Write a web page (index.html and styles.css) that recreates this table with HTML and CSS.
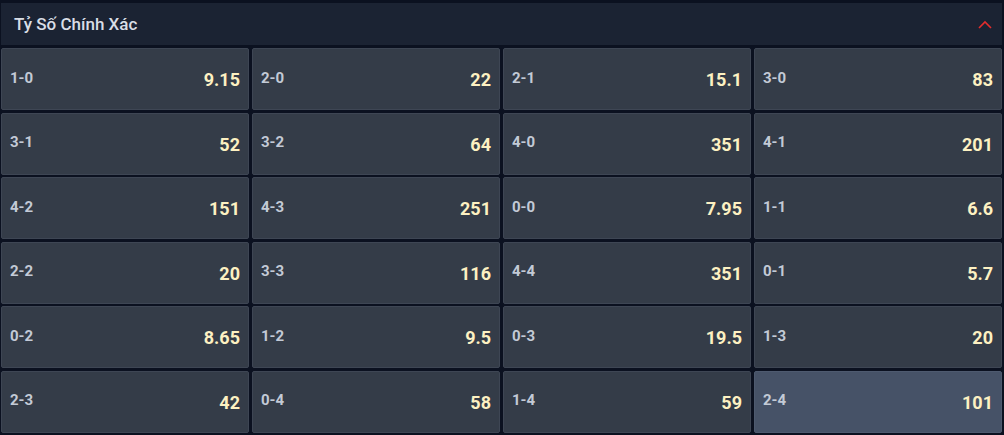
FILE: index.html
```html
<!DOCTYPE html>
<html lang="vi">
<head>
<meta charset="utf-8">
<title>Tỷ Số Chính Xác</title>
<link rel="stylesheet" href="styles.css">
</head>
<body>
<div class="panel">
  <div class="header">
    <span class="title">Tỷ Số Chính Xác</span>
    <svg class="chev" width="14" height="9" viewBox="0 0 14 9"><path d="M1 8 L7 2 L13 8" fill="none" stroke="#e42d2d" stroke-width="1.6"/></svg>
  </div>
  <div class="grid">
    <div class="cell"><span class="lbl">1-0</span><span class="odd">9.15</span></div>
    <div class="cell"><span class="lbl">2-0</span><span class="odd">22</span></div>
    <div class="cell"><span class="lbl">2-1</span><span class="odd">15.1</span></div>
    <div class="cell"><span class="lbl">3-0</span><span class="odd">83</span></div>
    <div class="cell"><span class="lbl">3-1</span><span class="odd">52</span></div>
    <div class="cell"><span class="lbl">3-2</span><span class="odd">64</span></div>
    <div class="cell"><span class="lbl">4-0</span><span class="odd">351</span></div>
    <div class="cell"><span class="lbl">4-1</span><span class="odd">201</span></div>
    <div class="cell"><span class="lbl">4-2</span><span class="odd">151</span></div>
    <div class="cell"><span class="lbl">4-3</span><span class="odd">251</span></div>
    <div class="cell"><span class="lbl">0-0</span><span class="odd">7.95</span></div>
    <div class="cell"><span class="lbl">1-1</span><span class="odd">6.6</span></div>
    <div class="cell"><span class="lbl">2-2</span><span class="odd">20</span></div>
    <div class="cell"><span class="lbl">3-3</span><span class="odd">116</span></div>
    <div class="cell"><span class="lbl">4-4</span><span class="odd">351</span></div>
    <div class="cell"><span class="lbl">0-1</span><span class="odd">5.7</span></div>
    <div class="cell"><span class="lbl">0-2</span><span class="odd">8.65</span></div>
    <div class="cell"><span class="lbl">1-2</span><span class="odd">9.5</span></div>
    <div class="cell"><span class="lbl">0-3</span><span class="odd">19.5</span></div>
    <div class="cell"><span class="lbl">1-3</span><span class="odd">20</span></div>
    <div class="cell"><span class="lbl">2-3</span><span class="odd">42</span></div>
    <div class="cell"><span class="lbl">0-4</span><span class="odd">58</span></div>
    <div class="cell"><span class="lbl">1-4</span><span class="odd">59</span></div>
    <div class="cell active"><span class="lbl">2-4</span><span class="odd">101</span></div>
  </div>
</div>
</body>
</html>
```
FILE: styles.css
```css
html, body {
  margin: 0;
  padding: 0;
  background: #0b1120;
  font-family: Roboto, "Liberation Sans", Arial, sans-serif;
}
.panel {
  padding: 3px 2px 0 1px;
}
.header {
  height: 42px;
  background: #1b2333;
  display: flex;
  align-items: center;
  justify-content: space-between;
  padding: 0 10px 0 13px;
  margin-bottom: 3px;
}
.title {
  color: #d9dee6;
  font-size: 17px;
  font-weight: 500;
}
.chev {
  display: block;
  margin-top: 1px;
}
.grid {
  display: grid;
  grid-template-columns: repeat(4, 1fr);
  column-gap: 3px;
  row-gap: 2.5px;
}
.cell {
  height: 62px;
  box-sizing: border-box;
  background: #343c48;
  border: 1px solid #3e4654;
  border-radius: 2px;
  display: flex;
  align-items: center;
  justify-content: space-between;
  padding: 0 8px 0 8px;
}
.cell.active {
  background: #465267;
  border-color: #4e5a6f;
}
.lbl {
  color: #c3cad6;
  font-weight: 700;
  font-size: 15px;
  margin-top: -3px;
}
.odd {
  color: #fdf1c2;
  font-weight: 700;
  font-size: 18px;
  margin-top: 1px;
}
```
